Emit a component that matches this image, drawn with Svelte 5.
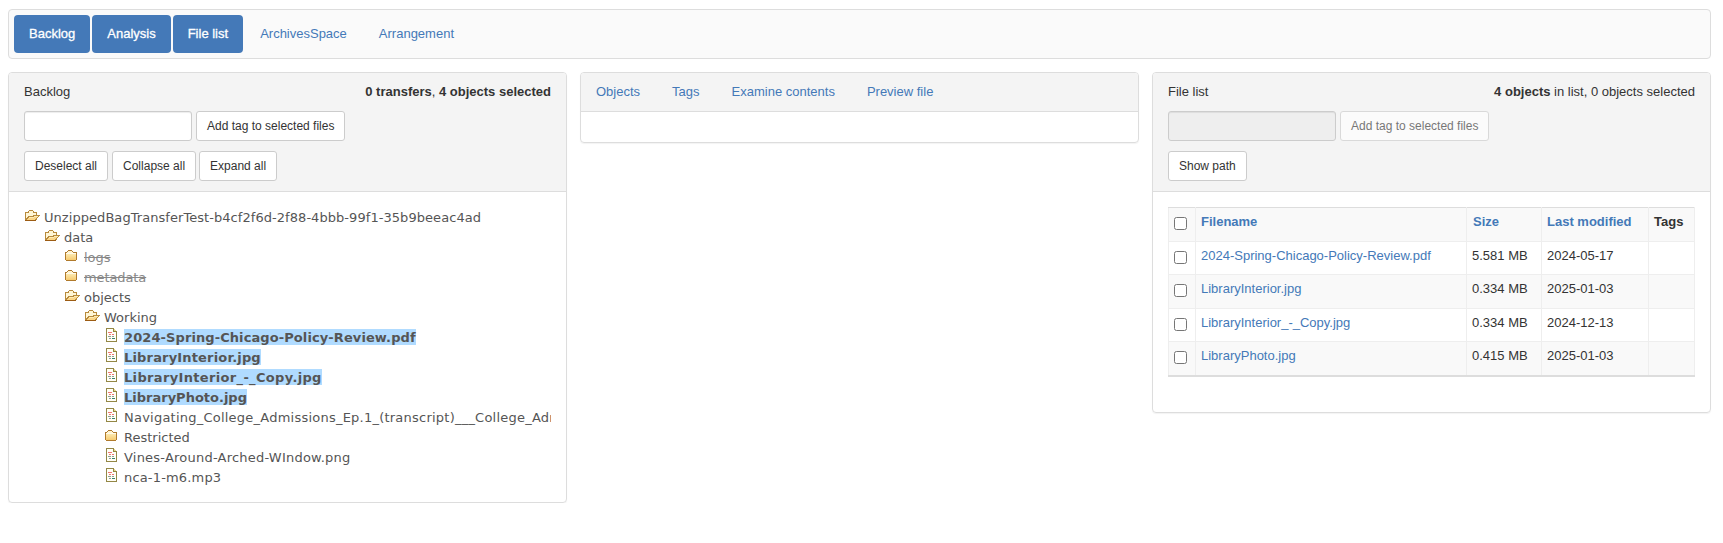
<script>
  const nav = [
    { label: 'Backlog', active: true },
    { label: 'Analysis', active: true },
    { label: 'File list', active: true },
    { label: 'ArchivesSpace', active: false },
    { label: 'Arrangement', active: false }
  ];
  const tabs = ['Objects', 'Tags', 'Examine contents', 'Preview file'];
  const tree = [
    { depth: 0, icon: 'open', name: 'UnzippedBagTransferTest-b4cf2f6d-2f88-4bbb-99f1-35b9beeac4ad', track: 0.055 },
    { depth: 1, icon: 'open', name: 'data' },
    { depth: 2, icon: 'closed', name: 'logs', off: true },
    { depth: 2, icon: 'closed', name: 'metadata', off: true, track: -0.1 },
    { depth: 2, icon: 'open', name: 'objects' },
    { depth: 3, icon: 'open', name: 'Working' },
    { depth: 4, icon: 'file', name: '2024-Spring-Chicago-Policy-Review.pdf', selected: true, track: 0.09 },
    { depth: 4, icon: 'file', name: 'LibraryInterior.jpg', selected: true, track: 0.17 },
    { depth: 4, icon: 'file', name: 'LibraryInterior_-_Copy.jpg', selected: true, track: 0.34 },
    { depth: 4, icon: 'file', name: 'LibraryPhoto.jpg', selected: true },
    { depth: 4, icon: 'file', name: 'Navigating_College_Admissions_Ep.1_(transcript)___College_Admissions', track: 0.23 },
    { depth: 4, icon: 'closed', name: 'Restricted' },
    { depth: 4, icon: 'file', name: 'Vines-Around-Arched-WIndow.png', track: 0.22 },
    { depth: 4, icon: 'file', name: 'nca-1-m6.mp3', track: 0.17 }
  ];
  const files = [
    { name: '2024-Spring-Chicago-Policy-Review.pdf', size: '5.581 MB', date: '2024-05-17' },
    { name: 'LibraryInterior.jpg', size: '0.334 MB', date: '2025-01-03' },
    { name: 'LibraryInterior_-_Copy.jpg', size: '0.334 MB', date: '2024-12-13' },
    { name: 'LibraryPhoto.jpg', size: '0.415 MB', date: '2025-01-03' }
  ];
</script>

<svg class="defs" aria-hidden="true">
  <defs>
    <linearGradient id="fold" x1="0" y1="0" x2="0" y2="1">
      <stop offset="0" stop-color="#fdedb8" />
      <stop offset="1" stop-color="#f7cb70" />
    </linearGradient>
  </defs>
</svg>

<div class="page">
  <nav class="bar">
    {#each nav as item}
      <a class="pill" class:active={item.active}>{item.label}</a>
    {/each}
  </nav>

  <main class="columns">
    <section class="panel">
      <header class="head tall">
        <div class="title"><span>Backlog</span><span><b>0 transfers</b>, <b>4 objects selected</b></span></div>
        <div class="controls"><input type="text" /><button>Add tag to selected files</button></div>
        <div class="controls"><button>Deselect all</button><button>Collapse all</button><button class="near">Expand all</button></div>
      </header>
      <ul class="tree">
        {#each tree as node}
          <li style:padding-left="{node.depth * 20}px">
            <svg class="icon" width="20" height="20" viewBox="0 0 20 20" shape-rendering="crispEdges">
              {#if node.icon === 'open'}
                <path d="M1 5H4V4H5V3H9V4H10V5H13V8H16V9H15V10H14V11H13V13H12V14H1Z" fill="#b88a3c" />
                <path d="M2 6H5V4H9V6H12V8H9V9H4V10H3V11H2Z" fill="#fff6d6" />
                <path d="M5 10H10V9H14V10H13V11H12V12H11V13H3V12H4V11H5Z" fill="#fbd586" />
                <path d="M5 10H10V9H14V10H10V11H5Z" fill="#fdebb5" />
                <path d="M1 13H12V14H1Z" fill="#9c5c14" />
              {:else if node.icon === 'closed'}
                <path d="M1 5H3V4H4V3H8V4H9V5H13V13H12V14H2V13H1Z" fill="#b07a2c" />
                <path d="M2 6H12V13H2Z" fill="url(#fold)" />
                <path d="M4 4H8V5H4Z M3 5H9V6H3Z" fill="#fff3cf" />
                <path d="M2 6.5H12" stroke="#fffbe8" />
              {:else}
                <path d="M2 1H10V2H11V3H12V4H13V15H2Z" fill="#938746" />
                <path d="M3 2H9V5H12V14H3Z" fill="#fffef6" />
                <path d="M10 2H11V3H12V4H10Z" fill="#e7d489" />
                <path d="M4 5.5H8M5 7.5H7M8 7.5H10" stroke="#f07474" />
                <path d="M4 9.5H7M8 9.5H10M5 11.5H7" stroke="#8aa090" />
                <path d="M8 11.5H11" stroke="#3a806d" />
              {/if}
            </svg>
            <span class="name" class:off={node.off} class:selected={node.selected} style:letter-spacing="{node.track ?? 0}px">{node.name}</span>
          </li>
        {/each}
      </ul>
    </section>

    <section class="panel">
      <header class="head tabs">
        {#each tabs as tab}<a>{tab}</a>{/each}
      </header>
      <div class="empty"></div>
    </section>

    <section class="panel">
      <header class="head tall">
        <div class="title"><span>File list</span><span><b>4 objects</b> in list, 0 objects selected</span></div>
        <div class="controls"><input type="text" disabled /><button disabled>Add tag to selected files</button></div>
        <div class="controls"><button>Show path</button></div>
      </header>
      <div class="list">
        <table>
          <colgroup><col class="c1" /><col class="c2" /><col class="c3" /><col class="c4" /><col /></colgroup>
          <thead>
            <tr>
              <th><input type="checkbox" /></th>
              <th><a>Filename</a></th>
              <th><a>Size</a></th>
              <th><a>Last modified</a></th>
              <th>Tags</th>
            </tr>
          </thead>
          <tbody>
            {#each files as file}
              <tr>
                <td><input type="checkbox" /></td>
                <td><a>{file.name}</a></td>
                <td>{file.size}</td>
                <td>{file.date}</td>
                <td></td>
              </tr>
            {/each}
          </tbody>
        </table>
      </div>
    </section>
  </main>
</div>

<style>
  :global(body) { background: #fff; }
  * { box-sizing: border-box; }
  .defs { position: absolute; width: 0; height: 0; }
  .page {
    width: 1723px;
    padding: 9px 12px 0 8px;
    font: 13px/18px "Liberation Sans", Arial, sans-serif;
    color: #333;
  }
  a { color: #4479b8; text-decoration: none; }
  .bar {
    display: flex;
    gap: 2px;
    height: 50px;
    padding: 5px;
    border: 1px solid #ddd;
    border-radius: 4px;
    background: #fafafa;
  }
  .pill { padding: 10px 15px; height: 38px; border-radius: 4px; }
  .pill.active { background: #4479b8; color: #fff; -webkit-text-stroke: .3px #fff; }
  .columns {
    display: grid;
    grid-template-columns: repeat(3, 559px);
    gap: 13px;
    align-items: start;
    margin-top: 13px;
  }
  .panel {
    border: 1px solid #ddd;
    border-radius: 4px;
    box-shadow: 0 1px 1px rgba(0, 0, 0, .05);
    overflow: hidden;
  }
  .head { background: #f4f4f4; border-bottom: 1px solid #ddd; padding: 10px 15px; }
  .tall { height: 119px; }
  .title { display: flex; justify-content: space-between; height: 18px; }
  .controls { display: flex; gap: 4px; margin-top: 10px; height: 30px; }
  input[type="text"] {
    width: 168px;
    height: 30px;
    border: 1px solid #ccc;
    border-radius: 3px;
    background: #fff;
    box-shadow: inset 0 1px 1px rgba(0, 0, 0, .075);
  }
  input[type="text"]:disabled { background: #eee; }
  button {
    height: 30px;
    padding: 5px 10px;
    border: 1px solid #ccc;
    border-radius: 3px;
    background: #fff;
    color: #333;
    font: 12px/18px "Liberation Sans", Arial, sans-serif;
    white-space: nowrap;
  }
  button:disabled { opacity: .65; }
  .near { margin-left: -1px; }
  .tabs { display: flex; gap: 32px; height: 39px; }
  .empty { height: 30px; }
  .tree {
    list-style: none;
    margin: 0;
    padding: 15px 15px 15px;
    height: 310px;
    font: 13px/16px Verdana, "DejaVu Sans", sans-serif;
    color: #555;
  }
  .tree li { display: flex; height: 20px; overflow: hidden; white-space: nowrap; }
  .icon { flex: none; }
  .name { height: 16px; margin-top: 2px; line-height: 17px; }
  .off { color: #888; text-decoration: line-through; }
  .selected { background: #b0dbff; font-weight: bold; }
  .list { height: 220px; padding: 15px; }
  table {
    width: 527px;
    table-layout: fixed;
    border-collapse: collapse;
    border-bottom: 2px solid #ddd;
  }
  .c1 { width: 27px; }
  .c2 { width: 271px; }
  .c3 { width: 75px; }
  .c4 { width: 107px; }
  th, td {
    height: 33px;
    padding: 5px;
    border: 1px solid #eee;
    text-align: left;
    vertical-align: top;
  }
  th { border-top-color: #ddd; }
  th:nth-child(3) { padding-left: 6px; }
  tr { height: 33.6px; }
  tbody tr:last-child { height: 34.4px; }
  tbody tr:last-child td { border-bottom: 2px solid #ddd; }
  thead tr, tbody tr:nth-child(even) { background: #f9f9f9; }
  input[type="checkbox"] { display: block; width: 13px; height: 13px; margin: 4px 0 0; }
</style>
